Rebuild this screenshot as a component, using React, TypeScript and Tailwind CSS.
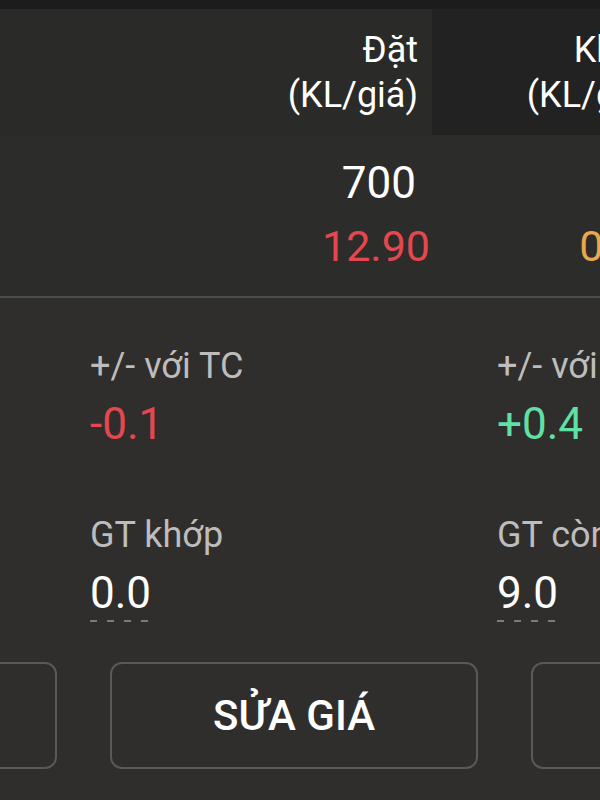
import React from 'react';

const RED = 'text-[#e5474f]';

function Dashes() {
  return (
    <div className="mt-[2px] flex gap-[10px]">
      {[0, 1, 2, 3].map((i) => (
        <span key={i} className="h-[2px] w-[7px] bg-[#7a7a7a]" />
      ))}
    </div>
  );
}

interface StatProps {
  label: string;
  value: string;
  tone: string;
  dashed?: boolean;
}

function Stat({ label, value, tone, dashed }: StatProps) {
  return (
    <div className="flex flex-col">
      <span className="text-[36px] leading-[40px] text-[#bdbdbd]">{label}</span>
      <span className={`mt-[13px] text-[44px] leading-[50px] ${tone}`}>{value}</span>
      {dashed && <Dashes />}
    </div>
  );
}

export default function App() {
  return (
    <div className="flex h-[800px] w-[600px] flex-col overflow-hidden bg-[#2f2e2c] font-[Roboto,sans-serif]">
      {/* status strip */}
      <div className="h-[9px] shrink-0 bg-[#1c1c1c]" />

      {/* column headers */}
      <div className="flex h-[126px] shrink-0">
        <div className="flex w-[432px] shrink-0 flex-col items-end bg-[#2a2a28] pr-[14px] pt-[19px] text-[36px] leading-[45px] text-white">
          <span>Đặt</span>
          <span>(KL/giá)</span>
        </div>
        <div className="flex w-[241px] shrink-0 flex-col items-end bg-[#222222] pr-[16px] pt-[19px] text-[36px] leading-[45px] text-white">
          <span>Khớp</span>
          <span>(KL/giá)</span>
        </div>
      </div>

      {/* order row */}
      <div className="flex h-[161px] shrink-0 bg-[#2c2c2a]">
        <div className="flex w-[432px] shrink-0 flex-col items-end pt-[23px] leading-[50px]">
          <span className="pr-[16px] text-[44px] text-white">700</span>
          <span className={`mt-[13px] pr-[2px] text-[43px] ${RED}`}>12.90</span>
        </div>
        <div className="flex w-[241px] shrink-0 flex-col items-end pt-[23px] leading-[50px]">
          <span className="pr-[16px] text-[44px] text-white">0</span>
          <span className="mt-[13px] pr-[10px] text-[43px] text-[#eba84b]">0.00</span>
        </div>
      </div>

      <div className="h-[2px] shrink-0 bg-[#4d4d4d]" />

      {/* details */}
      <div className="flex flex-col pt-[48px]">
        <div className="grid grid-cols-[407px_407px] pl-[90px]">
          <Stat label="+/- với TC" value="-0.1" tone={RED} />
          <Stat label="+/- với giá khớp" value="+0.4" tone="text-[#5fe0a5]" />
        </div>
        <div className="mt-[66px] grid grid-cols-[407px_407px] pl-[90px]">
          <Stat label="GT khớp" value="0.0" tone="text-white" dashed />
          <Stat label="GT còn lại" value="9.0" tone="text-white" dashed />
        </div>

        {/* actions */}
        <div className="ml-[-311px] mt-[40px] flex gap-[53px]">
          {['HỦY LỆNH', 'SỬA GIÁ', 'ĐẶT LẠI'].map((t) => (
            <button
              key={t}
              className="flex h-[107px] w-[368px] shrink-0 items-center justify-center rounded-[12px] border-2 border-[#595959] text-[42px] font-medium text-white"
            >
              {t}
            </button>
          ))}
        </div>
      </div>
    </div>
  );
}
